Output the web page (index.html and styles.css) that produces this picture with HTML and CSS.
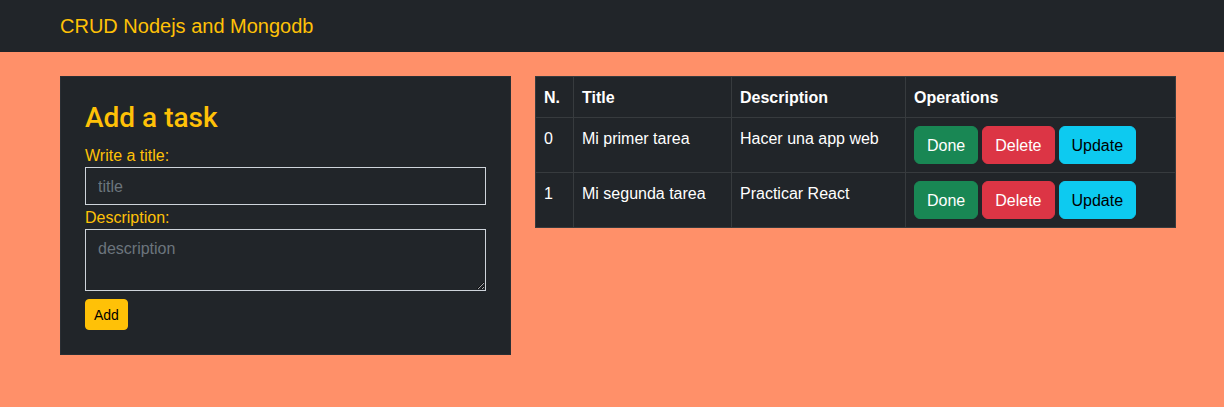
FILE: index.html
```html
<!DOCTYPE html>
<html lang="en">
<head>
<meta charset="utf-8">
<title>CRUD Nodejs and Mongodb</title>
<link rel="stylesheet" href="styles.css">
</head>
<body>
<nav class="navbar">
  <div class="container">
    <a class="brand" href="#">CRUD Nodejs and Mongodb</a>
  </div>
</nav>
<main class="container layout">
  <section class="card">
    <h3 class="card-title">Add a task</h3>
    <form class="task-form">
      <label class="label" for="title">Write a title:</label>
      <input class="field" id="title" type="text" placeholder="title">
      <label class="label" for="desc">Description:</label>
      <textarea class="field area" id="desc" rows="2" placeholder="description"></textarea>
      <button class="btn btn-sm btn-warning" type="button">Add</button>
    </form>
  </section>
  <section class="table-wrap">
    <table class="tasks">
      <thead>
        <tr>
          <th class="c-n">N.</th>
          <th class="c-title">Title</th>
          <th class="c-desc">Description</th>
          <th class="c-ops">Operations</th>
        </tr>
      </thead>
      <tbody>
        <tr>
          <td>0</td>
          <td>Mi primer tarea</td>
          <td>Hacer una app web</td>
          <td><div class="ops"><button class="btn btn-success">Done</button><button class="btn btn-danger">Delete</button><button class="btn btn-info">Update</button></div></td>
        </tr>
        <tr>
          <td>1</td>
          <td>Mi segunda tarea</td>
          <td>Practicar React</td>
          <td><div class="ops"><button class="btn btn-success">Done</button><button class="btn btn-danger">Delete</button><button class="btn btn-info">Update</button></div></td>
        </tr>
      </tbody>
    </table>
  </section>
</main>
</body>
</html>
```

FILE: styles.css
```css
* { box-sizing: border-box; }

html, body {
  margin: 0;
  padding: 0;
}

body {
  background: #ff9069;
  font-family: "Liberation Sans", Arial, sans-serif;
  font-size: 16px;
  line-height: 1.5;
  color: #fff;
  min-height: 407px;
}

.container {
  width: 1116px;
  margin-left: 60px;
}

.navbar {
  background: #212529;
  height: 52px;
  display: flex;
  align-items: center;
}

.brand {
  color: #ffc107;
  font-size: 20px;
  line-height: 30px;
  text-decoration: none;
  display: inline-block;
}

.layout {
  display: grid;
  grid-template-columns: 451px 640px;
  column-gap: 24px;
  align-items: start;
  padding-top: 24px;
}

.card {
  background: #212529;
  border: 1px solid #2a2e33;
  padding: 23px 24px 24px;
}

.card-title {
  margin: 0 0 9px;
  padding-top: 2px;
  height: 34px;
  color: #ffc107;
  font-family: Roboto, "Liberation Sans", sans-serif;
  font-size: 28px;
  font-weight: 500;
  line-height: 32px;
}

.task-form {
  display: flex;
  flex-direction: column;
  align-items: flex-start;
}

.label {
  color: #ffc107;
  font-size: 16px;
  line-height: 22px;
  padding-top: 2px;
}

.field {
  width: 100%;
  display: block;
  background: transparent;
  border: 1px solid #ced4da;
  border-radius: 0;
  color: #fff;
  font-family: inherit;
  font-size: 16px;
  line-height: 24px;
  padding: 7px 12px 5px;
  height: 38px;
  margin: 0;
}

.field::placeholder {
  color: #6c757d;
}

.area {
  height: 62px;
  resize: vertical;
}

.btn {
  display: inline-block;
  border: 1px solid transparent;
  border-radius: 6px;
  font-family: inherit;
  font-size: 16px;
  line-height: 24px;
  padding: 7px 12px 5px;
  cursor: pointer;
}

.btn-sm {
  font-size: 14px;
  line-height: 21px;
  padding: 5px 8px 3px;
  border-radius: 4px;
}

.btn-warning {
  background: #ffc107;
  border-color: #ffc107;
  color: #000;
  margin-top: 8px;
}

.btn-success {
  background: #198754;
  border-color: #198754;
  color: #fff;
}

.btn-danger {
  background: #dc3545;
  border-color: #dc3545;
  color: #fff;
}

.btn-info {
  background: #0dcaf0;
  border-color: #0dcaf0;
  color: #000;
}

.tasks {
  width: 640px;
  border-collapse: collapse;
  background: #212529;
  border: 1px solid #373b3e;
  table-layout: fixed;
}

.tasks th,
.tasks td {
  border: 1px solid #373b3e;
  padding: 9px 8px 7px;
  text-align: left;
  vertical-align: top;
  line-height: 24px;
  color: #fff;
}

.tasks td:last-child {
  padding-top: 8px;
  padding-bottom: 8px;
}

.tasks th {
  font-weight: 700;
}

.c-n { width: 38px; }
.c-title { width: 158px; }
.c-desc { width: 174px; }
.c-ops { width: 270px; }

.ops {
  display: flex;
  gap: 4px;
}
```
